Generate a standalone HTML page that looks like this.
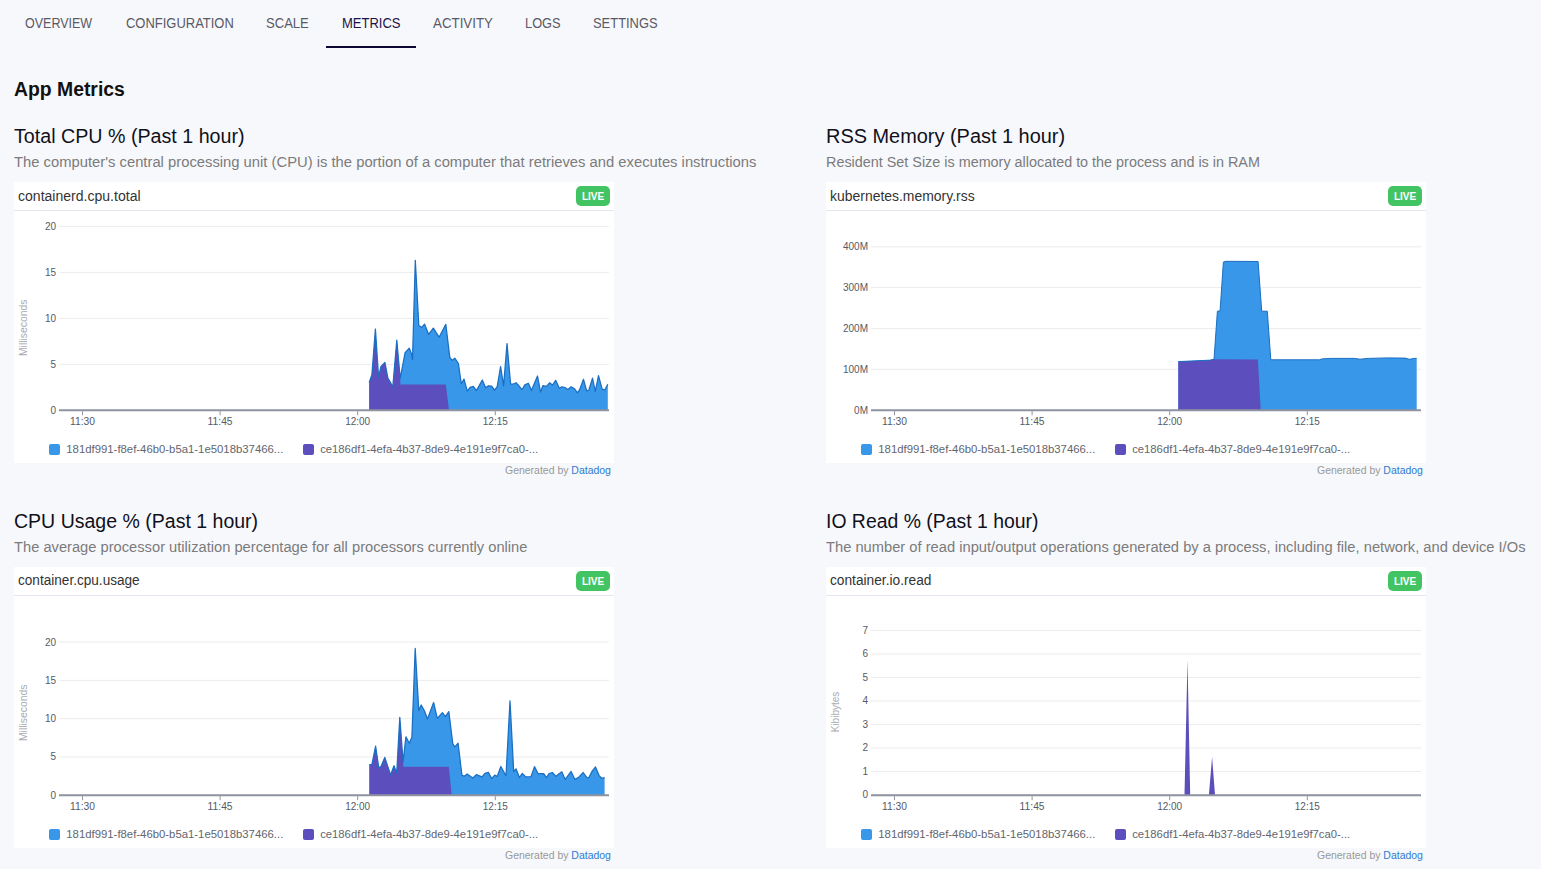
<!DOCTYPE html>
<html><head><meta charset="utf-8">
<style>
*{box-sizing:border-box;margin:0;padding:0}
html,body{width:1541px;height:869px;overflow:hidden;background:#f7f8fb;font-family:"Liberation Sans",sans-serif;}
.t{position:absolute;white-space:nowrap;transform-origin:0 0;line-height:1}
.tab{font-size:14px;color:#5a5a66}
.act{color:#1b1446}
.uline{position:absolute;left:326px;top:46px;width:90px;height:2px;background:#0b0733}
.h1{font-size:19.5px;font-weight:bold;color:#111}
.title{font-size:20px;color:#10101c}
.desc{font-size:14px;color:#7b7b7b}
.card{position:absolute;width:600px;height:281px;background:#fff}
.chead{position:absolute;left:0;top:0;width:600px;height:29px;border-bottom:1px solid #e3e6ee}
.cname{font-size:14px;color:#333}
.live{position:absolute;left:562px;top:4px;width:34px;height:20px;background:#43c463;border-radius:5px;color:#fff;font-weight:bold;font-size:10px;text-align:center;line-height:21px}
.gen{font-size:10px;color:#999;transform:scaleX(1.047)}
.gen b{font-weight:normal;color:#2e7bcf}
svg{position:absolute;left:0;top:0}
</style></head><body>
<div id="tab1" class="t tab" style="left:25px;top:16px;transform:scaleX(0.893)">OVERVIEW</div>
<div id="tab2" class="t tab" style="left:126px;top:16px;transform:scaleX(0.926)">CONFIGURATION</div>
<div id="tab3" class="t tab" style="left:266px;top:16px;transform:scaleX(0.933)">SCALE</div>
<div id="tab4" class="t tab act" style="left:342px;top:16px;transform:scaleX(0.929)">METRICS</div>
<div id="tab5" class="t tab" style="left:433px;top:16px;transform:scaleX(0.951)">ACTIVITY</div>
<div id="tab6" class="t tab" style="left:525px;top:16px;transform:scaleX(0.916)">LOGS</div>
<div id="tab7" class="t tab" style="left:593px;top:16px;transform:scaleX(0.923)">SETTINGS</div>
<div class="uline"></div>
<div id="h1" class="t h1" style="left:14px;top:80px;transform:scaleX(0.993)">App Metrics</div>

<div id="title1" class="t title" style="left:14px;top:126px;transform:scaleX(0.983)">Total CPU % (Past 1 hour)</div>
<div id="desc1" class="t desc" style="left:14px;top:155px;transform:scaleX(1.056)">The computer's central processing unit (CPU) is the portion of a computer that retrieves and executes instructions</div>
<div class="card" style="left:14px;top:182px"><div class="chead"></div><div class="live">LIVE</div></div>
<div id="cname1" class="t cname" style="left:18px;top:188.5px;transform:scaleX(1.003)">containerd.cpu.total</div>
<div id="gen1" class="t gen" style="left:505px;top:466px">Generated by <b>Datadog</b></div>

<div id="title2" class="t title" style="left:826px;top:126px;transform:scaleX(0.996)">RSS Memory (Past 1 hour)</div>
<div id="desc2" class="t desc" style="left:826px;top:155px;transform:scaleX(1.027)">Resident Set Size is memory allocated to the process and is in RAM</div>
<div class="card" style="left:826px;top:182px"><div class="chead"></div><div class="live">LIVE</div></div>
<div id="cname2" class="t cname" style="left:830px;top:188.5px;transform:scaleX(0.996)">kubernetes.memory.rss</div>
<div id="gen2" class="t gen" style="left:1317px;top:466px">Generated by <b>Datadog</b></div>

<div id="title3" class="t title" style="left:14px;top:511px;transform:scaleX(0.976)">CPU Usage % (Past 1 hour)</div>
<div id="desc3" class="t desc" style="left:14px;top:540px;transform:scaleX(1.049)">The average processor utilization percentage for all processors currently online</div>
<div class="card" style="left:14px;top:567px"><div class="chead"></div><div class="live">LIVE</div></div>
<div id="cname3" class="t cname" style="left:18px;top:573px;transform:scaleX(0.971)">container.cpu.usage</div>
<div id="gen3" class="t gen" style="left:505px;top:851px">Generated by <b>Datadog</b></div>

<div id="title4" class="t title" style="left:826px;top:511px;transform:scaleX(0.970)">IO Read % (Past 1 hour)</div>
<div id="desc4" class="t desc" style="left:826px;top:540px;transform:scaleX(1.05)">The number of read input/output operations generated by a process, including file, network, and device I/Os</div>
<div class="card" style="left:826px;top:567px"><div class="chead"></div><div class="live">LIVE</div></div>
<div id="cname4" class="t cname" style="left:830px;top:573px;transform:scaleX(0.98)">container.io.read</div>
<div id="gen4" class="t gen" style="left:1317px;top:851px">Generated by <b>Datadog</b></div>

<svg width="1541" height="869" viewBox="0 0 1541 869" style="position:absolute;left:0;top:0" font-family="Liberation Sans, sans-serif">
<line x1="59" y1="226.4" x2="609" y2="226.4" stroke="#ececec" stroke-width="1"/>
<line x1="59" y1="272.4" x2="609" y2="272.4" stroke="#ececec" stroke-width="1"/>
<line x1="59" y1="318.4" x2="609" y2="318.4" stroke="#ececec" stroke-width="1"/>
<line x1="59" y1="364.4" x2="609" y2="364.4" stroke="#ececec" stroke-width="1"/>
<line x1="59" y1="410.4" x2="609" y2="410.4" stroke="#ececec" stroke-width="1"/>
<polygon points="369.2,382.5 371.9,374.6 375.4,329.0 378.6,377.2 380.9,366.6 384.9,362.4 387.8,377.7 392.8,386.7 396.8,340.2 400.2,378.5 405.1,352.7 409.3,348.1 411.6,354.1 412.5,359.6 415.3,260.3 418.8,325.5 421.7,327.4 424.5,324.1 428.6,334.3 433.3,328.2 439.1,337.2 445.8,324.3 449.8,357.3 452.1,360.3 454.8,358.2 458.4,363.5 461.3,383.8 464.0,379.1 467.3,391.1 470.1,387.3 473.3,386.3 476.4,390.6 482.3,380.0 485.6,387.8 488.4,385.8 491.7,386.2 494.6,390.1 497.2,386.7 500.6,366.5 503.6,385.8 507.0,343.6 510.6,384.2 512.9,384.2 516.0,382.7 518.9,385.8 522.0,389.7 524.8,384.9 528.4,383.3 531.4,390.6 537.5,376.0 540.6,392.1 542.8,385.7 546.4,386.4 549.6,382.8 552.5,385.0 555.7,380.3 559.3,388.2 561.8,386.8 565.0,387.5 567.8,389.6 571.0,386.8 574.6,388.9 577.5,392.8 579.6,389.6 583.5,379.3 586.7,391.0 588.9,390.0 592.5,378.2 595.3,391.4 598.5,375.7 602.1,388.9 604.6,390.3 607.8,384.3 607.8,410.2 369.2,410.2" fill="#3897e8"/>
<polygon points="369.2,410.0 369.2,382.5 371.9,374.6 375.4,329.0 378.6,377.2 380.9,366.6 384.9,362.4 387.8,377.7 392.8,386.7 396.8,340.2 400.2,378.5 400.4,384.4 445.8,384.4 449.0,410.0" fill="#5c4fbd"/>
<polyline points="369.2,382.5 371.9,374.6 375.4,329.0 378.6,377.2 380.9,366.6 384.9,362.4 387.8,377.7 392.8,386.7 396.8,340.2 400.2,378.5 405.1,352.7 409.3,348.1 411.6,354.1 412.5,359.6 415.3,260.3 418.8,325.5 421.7,327.4 424.5,324.1 428.6,334.3 433.3,328.2 439.1,337.2 445.8,324.3 449.8,357.3 452.1,360.3 454.8,358.2 458.4,363.5 461.3,383.8 464.0,379.1 467.3,391.1 470.1,387.3 473.3,386.3 476.4,390.6 482.3,380.0 485.6,387.8 488.4,385.8 491.7,386.2 494.6,390.1 497.2,386.7 500.6,366.5 503.6,385.8 507.0,343.6 510.6,384.2 512.9,384.2 516.0,382.7 518.9,385.8 522.0,389.7 524.8,384.9 528.4,383.3 531.4,390.6 537.5,376.0 540.6,392.1 542.8,385.7 546.4,386.4 549.6,382.8 552.5,385.0 555.7,380.3 559.3,388.2 561.8,386.8 565.0,387.5 567.8,389.6 571.0,386.8 574.6,388.9 577.5,392.8 579.6,389.6 583.5,379.3 586.7,391.0 588.9,390.0 592.5,378.2 595.3,391.4 598.5,375.7 602.1,388.9 604.6,390.3 607.8,384.3" fill="none" stroke="#1b6ec2" stroke-width="1.25" stroke-linejoin="round"/>
<line x1="59" y1="410.2" x2="609.0" y2="410.2" stroke="#8f93a0" stroke-width="2"/>
<line x1="82.5" y1="411.2" x2="82.5" y2="415.2" stroke="#8f93a0" stroke-width="1"/>
<text x="82.5" y="424.8" text-anchor="middle" font-size="10.4" fill="#555a64" textLength="25" lengthAdjust="spacingAndGlyphs">11:30</text>
<line x1="220.1" y1="411.2" x2="220.1" y2="415.2" stroke="#8f93a0" stroke-width="1"/>
<text x="220.1" y="424.8" text-anchor="middle" font-size="10.4" fill="#555a64" textLength="25" lengthAdjust="spacingAndGlyphs">11:45</text>
<line x1="357.7" y1="411.2" x2="357.7" y2="415.2" stroke="#8f93a0" stroke-width="1"/>
<text x="357.7" y="424.8" text-anchor="middle" font-size="10.4" fill="#555a64" textLength="25" lengthAdjust="spacingAndGlyphs">12:00</text>
<line x1="495.3" y1="411.2" x2="495.3" y2="415.2" stroke="#8f93a0" stroke-width="1"/>
<text x="495.3" y="424.8" text-anchor="middle" font-size="10.4" fill="#555a64" textLength="25" lengthAdjust="spacingAndGlyphs">12:15</text>
<text x="56.0" y="229.8" text-anchor="end" font-size="10" fill="#555a64">20</text>
<text x="56.0" y="275.8" text-anchor="end" font-size="10" fill="#555a64">15</text>
<text x="56.0" y="321.8" text-anchor="end" font-size="10" fill="#555a64">10</text>
<text x="56.0" y="367.8" text-anchor="end" font-size="10" fill="#555a64">5</text>
<text x="56.0" y="413.8" text-anchor="end" font-size="10" fill="#555a64">0</text>
<text transform="translate(27.2,327.8) rotate(-90)" text-anchor="middle" font-size="10" fill="#a9abb3" textLength="56.5" lengthAdjust="spacingAndGlyphs">Milliseconds</text>
<rect x="49.0" y="444.0" width="11" height="11" rx="2" fill="#3897e8"/>
<text x="66.3" y="453.0" font-size="11" fill="#62656e" textLength="217" lengthAdjust="spacingAndGlyphs">181df991-f8ef-46b0-b5a1-1e5018b37466...</text>
<rect x="303.0" y="444.0" width="11" height="11" rx="2" fill="#5c4fbd"/>
<text x="320.2" y="453.0" font-size="11" fill="#62656e" textLength="218" lengthAdjust="spacingAndGlyphs">ce186df1-4efa-4b37-8de9-4e191e9f7ca0-...</text>
<line x1="871" y1="246.8" x2="1421" y2="246.8" stroke="#ececec" stroke-width="1"/>
<line x1="871" y1="287.5" x2="1421" y2="287.5" stroke="#ececec" stroke-width="1"/>
<line x1="871" y1="328.6" x2="1421" y2="328.6" stroke="#ececec" stroke-width="1"/>
<line x1="871" y1="369.3" x2="1421" y2="369.3" stroke="#ececec" stroke-width="1"/>
<polygon points="1178.3,361.6 1209.6,360.2 1214.0,359.3 1217.4,311.2 1220.1,310.8 1223.4,262.0 1226.0,261.3 1258.1,261.5 1261.7,311.2 1267.3,311.2 1270.8,359.8 1319.5,359.8 1321.8,358.9 1331.4,358.4 1354.5,358.4 1360.0,359.2 1368.3,358.4 1387.6,357.9 1405.1,358.1 1409.7,359.3 1413.8,358.4 1416.7,358.4 1416.7,410.2 1178.3,410.2" fill="#3897e8"/>
<polygon points="1178.3,410.0 1178.3,361.6 1209.6,360.2 1214.0,359.3 1257.9,359.5 1260.7,410.0" fill="#5c4fbd"/>
<polyline points="1178.3,361.6 1209.6,360.2 1214.0,359.3 1217.4,311.2 1220.1,310.8 1223.4,262.0 1226.0,261.3 1258.1,261.5 1261.7,311.2 1267.3,311.2 1270.8,359.8 1319.5,359.8 1321.8,358.9 1331.4,358.4 1354.5,358.4 1360.0,359.2 1368.3,358.4 1387.6,357.9 1405.1,358.1 1409.7,359.3 1413.8,358.4 1416.7,358.4" fill="none" stroke="#1b6ec2" stroke-width="1.00" stroke-linejoin="round"/>
<line x1="871" y1="410.2" x2="1421.0" y2="410.2" stroke="#8f93a0" stroke-width="2"/>
<line x1="894.5" y1="411.2" x2="894.5" y2="415.2" stroke="#8f93a0" stroke-width="1"/>
<text x="894.5" y="424.8" text-anchor="middle" font-size="10.4" fill="#555a64" textLength="25" lengthAdjust="spacingAndGlyphs">11:30</text>
<line x1="1032.1" y1="411.2" x2="1032.1" y2="415.2" stroke="#8f93a0" stroke-width="1"/>
<text x="1032.1" y="424.8" text-anchor="middle" font-size="10.4" fill="#555a64" textLength="25" lengthAdjust="spacingAndGlyphs">11:45</text>
<line x1="1169.7" y1="411.2" x2="1169.7" y2="415.2" stroke="#8f93a0" stroke-width="1"/>
<text x="1169.7" y="424.8" text-anchor="middle" font-size="10.4" fill="#555a64" textLength="25" lengthAdjust="spacingAndGlyphs">12:00</text>
<line x1="1307.3" y1="411.2" x2="1307.3" y2="415.2" stroke="#8f93a0" stroke-width="1"/>
<text x="1307.3" y="424.8" text-anchor="middle" font-size="10.4" fill="#555a64" textLength="25" lengthAdjust="spacingAndGlyphs">12:15</text>
<text x="868.0" y="250.2" text-anchor="end" font-size="10" fill="#555a64">400M</text>
<text x="868.0" y="290.9" text-anchor="end" font-size="10" fill="#555a64">300M</text>
<text x="868.0" y="332.0" text-anchor="end" font-size="10" fill="#555a64">200M</text>
<text x="868.0" y="372.7" text-anchor="end" font-size="10" fill="#555a64">100M</text>
<text x="868.0" y="413.6" text-anchor="end" font-size="10" fill="#555a64">0M</text>
<rect x="861.0" y="444.0" width="11" height="11" rx="2" fill="#3897e8"/>
<text x="878.3" y="453.0" font-size="11" fill="#62656e" textLength="217" lengthAdjust="spacingAndGlyphs">181df991-f8ef-46b0-b5a1-1e5018b37466...</text>
<rect x="1115.0" y="444.0" width="11" height="11" rx="2" fill="#5c4fbd"/>
<text x="1132.2" y="453.0" font-size="11" fill="#62656e" textLength="218" lengthAdjust="spacingAndGlyphs">ce186df1-4efa-4b37-8de9-4e191e9f7ca0-...</text>
<line x1="59" y1="642.1" x2="609" y2="642.1" stroke="#ececec" stroke-width="1"/>
<line x1="59" y1="680.4" x2="609" y2="680.4" stroke="#ececec" stroke-width="1"/>
<line x1="59" y1="718.7" x2="609" y2="718.7" stroke="#ececec" stroke-width="1"/>
<line x1="59" y1="757.0" x2="609" y2="757.0" stroke="#ececec" stroke-width="1"/>
<line x1="59" y1="795.3" x2="609" y2="795.3" stroke="#ececec" stroke-width="1"/>
<polygon points="369.4,764.5 371.9,764.5 375.6,746.1 378.8,768.0 381.1,766.2 384.8,757.4 390.6,774.9 394.0,765.7 396.7,773.2 399.8,717.3 403.1,762.0 405.9,736.9 409.4,743.2 411.9,737.0 415.2,648.3 418.8,710.5 421.2,705.0 424.4,710.8 427.5,719.0 433.6,702.5 437.3,718.3 442.4,712.7 445.4,716.6 448.8,711.6 452.8,743.8 454.9,746.8 458.1,743.2 461.9,775.1 464.2,776.3 467.1,774.0 472.8,778.0 476.3,774.6 482.0,776.9 484.9,773.4 488.4,772.3 491.6,778.6 494.7,775.2 497.3,776.3 500.8,766.5 506.0,775.7 510.0,700.9 513.7,771.7 516.0,768.8 519.4,777.5 522.3,773.4 525.8,776.9 531.0,776.7 534.5,766.6 538.1,773.8 540.4,773.5 543.5,773.5 546.6,777.6 549.0,773.5 552.4,772.5 555.9,776.3 561.8,771.8 565.2,779.4 571.1,771.4 574.9,779.4 578.3,777.6 583.2,772.5 587.3,778.0 589.0,777.3 592.2,771.1 595.5,767.0 599.1,775.6 601.8,778.3 604.6,777.6 604.6,795.2 369.4,795.2" fill="#3897e8"/>
<polygon points="369.4,795.0 369.4,764.5 371.9,764.5 375.6,746.1 378.8,768.0 381.1,766.2 384.8,757.4 390.6,774.9 394.0,765.7 396.7,773.2 399.8,717.3 403.1,762.0 403.3,766.7 448.8,766.7 451.7,795.0" fill="#5c4fbd"/>
<polyline points="369.4,764.5 371.9,764.5 375.6,746.1 378.8,768.0 381.1,766.2 384.8,757.4 390.6,774.9 394.0,765.7 396.7,773.2 399.8,717.3 403.1,762.0 405.9,736.9 409.4,743.2 411.9,737.0 415.2,648.3 418.8,710.5 421.2,705.0 424.4,710.8 427.5,719.0 433.6,702.5 437.3,718.3 442.4,712.7 445.4,716.6 448.8,711.6 452.8,743.8 454.9,746.8 458.1,743.2 461.9,775.1 464.2,776.3 467.1,774.0 472.8,778.0 476.3,774.6 482.0,776.9 484.9,773.4 488.4,772.3 491.6,778.6 494.7,775.2 497.3,776.3 500.8,766.5 506.0,775.7 510.0,700.9 513.7,771.7 516.0,768.8 519.4,777.5 522.3,773.4 525.8,776.9 531.0,776.7 534.5,766.6 538.1,773.8 540.4,773.5 543.5,773.5 546.6,777.6 549.0,773.5 552.4,772.5 555.9,776.3 561.8,771.8 565.2,779.4 571.1,771.4 574.9,779.4 578.3,777.6 583.2,772.5 587.3,778.0 589.0,777.3 592.2,771.1 595.5,767.0 599.1,775.6 601.8,778.3 604.6,777.6" fill="none" stroke="#1b6ec2" stroke-width="1.25" stroke-linejoin="round"/>
<line x1="59" y1="795.2" x2="609.0" y2="795.2" stroke="#8f93a0" stroke-width="2"/>
<line x1="82.5" y1="796.2" x2="82.5" y2="800.2" stroke="#8f93a0" stroke-width="1"/>
<text x="82.5" y="809.8" text-anchor="middle" font-size="10.4" fill="#555a64" textLength="25" lengthAdjust="spacingAndGlyphs">11:30</text>
<line x1="220.1" y1="796.2" x2="220.1" y2="800.2" stroke="#8f93a0" stroke-width="1"/>
<text x="220.1" y="809.8" text-anchor="middle" font-size="10.4" fill="#555a64" textLength="25" lengthAdjust="spacingAndGlyphs">11:45</text>
<line x1="357.7" y1="796.2" x2="357.7" y2="800.2" stroke="#8f93a0" stroke-width="1"/>
<text x="357.7" y="809.8" text-anchor="middle" font-size="10.4" fill="#555a64" textLength="25" lengthAdjust="spacingAndGlyphs">12:00</text>
<line x1="495.3" y1="796.2" x2="495.3" y2="800.2" stroke="#8f93a0" stroke-width="1"/>
<text x="495.3" y="809.8" text-anchor="middle" font-size="10.4" fill="#555a64" textLength="25" lengthAdjust="spacingAndGlyphs">12:15</text>
<text x="56.0" y="645.5" text-anchor="end" font-size="10" fill="#555a64">20</text>
<text x="56.0" y="683.8" text-anchor="end" font-size="10" fill="#555a64">15</text>
<text x="56.0" y="722.1" text-anchor="end" font-size="10" fill="#555a64">10</text>
<text x="56.0" y="760.4" text-anchor="end" font-size="10" fill="#555a64">5</text>
<text x="56.0" y="798.7" text-anchor="end" font-size="10" fill="#555a64">0</text>
<text transform="translate(27.2,712.8) rotate(-90)" text-anchor="middle" font-size="10" fill="#a9abb3" textLength="56.5" lengthAdjust="spacingAndGlyphs">Milliseconds</text>
<rect x="49.0" y="829.0" width="11" height="11" rx="2" fill="#3897e8"/>
<text x="66.3" y="838.0" font-size="11" fill="#62656e" textLength="217" lengthAdjust="spacingAndGlyphs">181df991-f8ef-46b0-b5a1-1e5018b37466...</text>
<rect x="303.0" y="829.0" width="11" height="11" rx="2" fill="#5c4fbd"/>
<text x="320.2" y="838.0" font-size="11" fill="#62656e" textLength="218" lengthAdjust="spacingAndGlyphs">ce186df1-4efa-4b37-8de9-4e191e9f7ca0-...</text>
<line x1="871" y1="630.5" x2="1421" y2="630.5" stroke="#ececec" stroke-width="1"/>
<line x1="871" y1="654.0" x2="1421" y2="654.0" stroke="#ececec" stroke-width="1"/>
<line x1="871" y1="677.5" x2="1421" y2="677.5" stroke="#ececec" stroke-width="1"/>
<line x1="871" y1="701.0" x2="1421" y2="701.0" stroke="#ececec" stroke-width="1"/>
<line x1="871" y1="724.5" x2="1421" y2="724.5" stroke="#ececec" stroke-width="1"/>
<line x1="871" y1="748.0" x2="1421" y2="748.0" stroke="#ececec" stroke-width="1"/>
<line x1="871" y1="771.5" x2="1421" y2="771.5" stroke="#ececec" stroke-width="1"/>
<line x1="871" y1="795.0" x2="1421" y2="795.0" stroke="#ececec" stroke-width="1"/>
<polygon points="1184.5,795.0 1187.5,659.8 1190.2,795.0" fill="#5c4fbd"/>
<polygon points="1208.9,795.0 1212.1,756.9 1215.0,795.0" fill="#5c4fbd"/>
<line x1="871" y1="795.2" x2="1421.0" y2="795.2" stroke="#8f93a0" stroke-width="2"/>
<line x1="894.5" y1="796.2" x2="894.5" y2="800.2" stroke="#8f93a0" stroke-width="1"/>
<text x="894.5" y="809.8" text-anchor="middle" font-size="10.4" fill="#555a64" textLength="25" lengthAdjust="spacingAndGlyphs">11:30</text>
<line x1="1032.1" y1="796.2" x2="1032.1" y2="800.2" stroke="#8f93a0" stroke-width="1"/>
<text x="1032.1" y="809.8" text-anchor="middle" font-size="10.4" fill="#555a64" textLength="25" lengthAdjust="spacingAndGlyphs">11:45</text>
<line x1="1169.7" y1="796.2" x2="1169.7" y2="800.2" stroke="#8f93a0" stroke-width="1"/>
<text x="1169.7" y="809.8" text-anchor="middle" font-size="10.4" fill="#555a64" textLength="25" lengthAdjust="spacingAndGlyphs">12:00</text>
<line x1="1307.3" y1="796.2" x2="1307.3" y2="800.2" stroke="#8f93a0" stroke-width="1"/>
<text x="1307.3" y="809.8" text-anchor="middle" font-size="10.4" fill="#555a64" textLength="25" lengthAdjust="spacingAndGlyphs">12:15</text>
<text x="868.0" y="633.9" text-anchor="end" font-size="10" fill="#555a64">7</text>
<text x="868.0" y="657.4" text-anchor="end" font-size="10" fill="#555a64">6</text>
<text x="868.0" y="680.9" text-anchor="end" font-size="10" fill="#555a64">5</text>
<text x="868.0" y="704.4" text-anchor="end" font-size="10" fill="#555a64">4</text>
<text x="868.0" y="727.9" text-anchor="end" font-size="10" fill="#555a64">3</text>
<text x="868.0" y="751.4" text-anchor="end" font-size="10" fill="#555a64">2</text>
<text x="868.0" y="774.9" text-anchor="end" font-size="10" fill="#555a64">1</text>
<text x="868.0" y="798.4" text-anchor="end" font-size="10" fill="#555a64">0</text>
<text transform="translate(839.2,712.0) rotate(-90)" text-anchor="middle" font-size="10" fill="#a9abb3" textLength="40.5" lengthAdjust="spacingAndGlyphs">Kibibytes</text>
<rect x="861.0" y="829.0" width="11" height="11" rx="2" fill="#3897e8"/>
<text x="878.3" y="838.0" font-size="11" fill="#62656e" textLength="217" lengthAdjust="spacingAndGlyphs">181df991-f8ef-46b0-b5a1-1e5018b37466...</text>
<rect x="1115.0" y="829.0" width="11" height="11" rx="2" fill="#5c4fbd"/>
<text x="1132.2" y="838.0" font-size="11" fill="#62656e" textLength="218" lengthAdjust="spacingAndGlyphs">ce186df1-4efa-4b37-8de9-4e191e9f7ca0-...</text>
</svg>
</body></html>
